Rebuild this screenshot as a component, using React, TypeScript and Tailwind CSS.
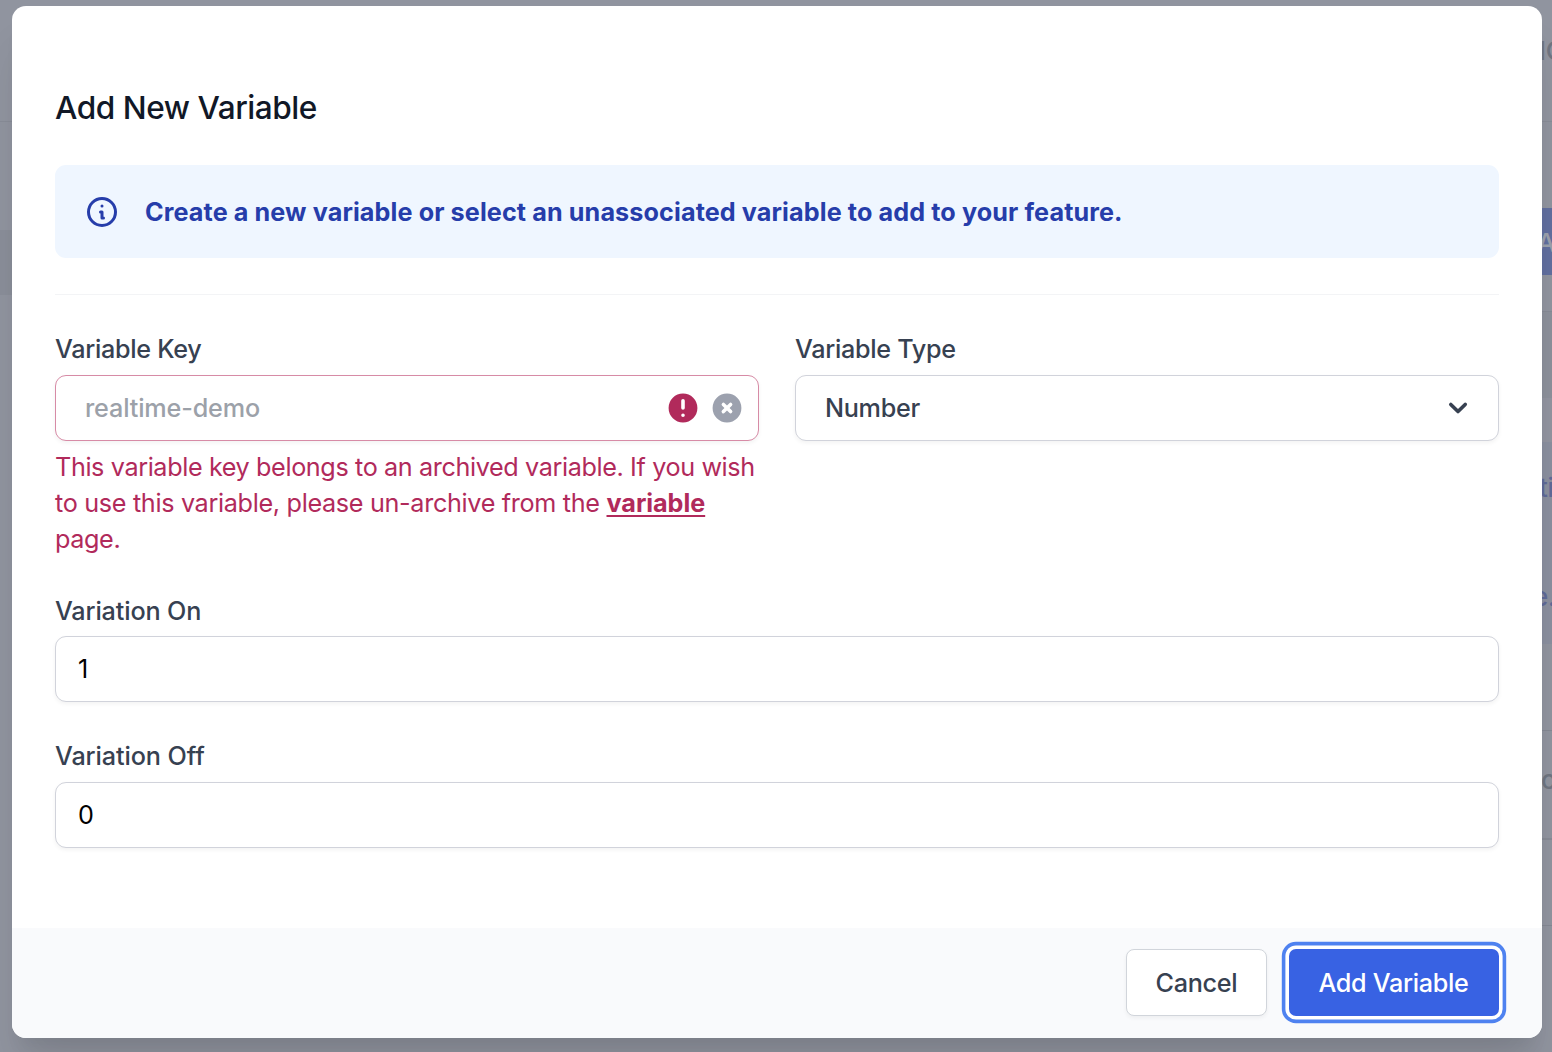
import type { ReactNode } from "react";
import { HiChevronDown, HiExclamationCircle, HiOutlineInformationCircle, HiXCircle } from "react-icons/hi";

function Backdrop() {
  return (
    <div className="absolute inset-0 flex justify-between bg-[#90949f] text-[26px] leading-9 font-medium">
      <div className="flex w-3 flex-col">
        <div className="h-[121px]" />
        <div className="h-[109px] border-t border-[#888c97]" />
        <div className="h-[65px] bg-[#8a8e99]" />
      </div>
      <div className="flex w-[10px] flex-col overflow-hidden whitespace-nowrap">
        <div className="flex h-[121px] items-start pt-[33px] text-[#6f7581]">
          <span className="-ml-[3px]">I</span>
          <span>C</span>
        </div>
        <div className="h-[87px] border-t border-[#888c97]" />
        <div className="flex h-[67px] items-center bg-[#616f9f] pt-[3px] text-[#9ba0ac]">
          <span className="-ml-[5px]">A</span>
        </div>
        <div className="h-[37px] border-b border-[#868a95]" />
        <div className="h-[86px] bg-[#8c909b]" />
        <div className="h-11 bg-[#9194a0]" />
        <div className="h-[202px] bg-[#8a8f9f] text-[#5f6a98]">
          <div className="-ml-[3px] pt-7">ti</div>
          <div className="-ml-[9px] pt-[73px]">e.</div>
        </div>
        <div className="h-[87px] border-b border-[#848893]" />
        <div className="flex h-[109px] items-center border-b-2 border-[#868a95] pb-[10px] text-[#6f7581]">
          <span className="-ml-px">c</span>
        </div>
        <div className="h-[86px] border-b border-[#848893]" />
      </div>
    </div>
  );
}

function Label({ children, className = "" }: { children: ReactNode; className?: string }) {
  return <div className={"text-[25.2px] leading-9 font-medium text-[#374151] " + className}>{children}</div>;
}

const field = "flex h-[66px] items-center rounded-[11px] border bg-white shadow-[0_2px_4px_rgba(0,0,0,0.05)]";

export default function App() {
  return (
    <div className="relative h-[1052px] w-[1552px] overflow-hidden px-3 pt-[6px] font-[Inter,sans-serif] tracking-[-0.3px]">
      <Backdrop />
      <div className="relative flex h-[1032px] w-[1530px] flex-col overflow-visible rounded-[14px] bg-white shadow-[0_36px_45px_-9px_rgba(0,0,0,0.1),0_18px_18px_-9px_rgba(0,0,0,0.06)]">
        <div className="flex h-[922px] flex-col px-[43px] pt-20">
          <h1 className="text-[31.6px] leading-[44px] font-medium tracking-[-0.47px] text-[#111827]">Add New Variable</h1>
          <div className="mt-[35px] flex h-[93px] items-center rounded-[11px] bg-[#eff6ff] pl-[29px] text-[#263daa]">
            <HiOutlineInformationCircle className="size-9" />
            <p className="ml-[25px] text-[25.2px] leading-9 font-bold tracking-[0.1px]">
              Create a new variable or select an unassociated variable to add to your feature.
            </p>
          </div>
          <hr className="mt-9 border-[#f3f4f6]" />
          <div className="mt-9 grid h-[262px] grid-cols-2 gap-9">
            <div>
              <Label>Variable Key</Label>
              <div className={field + " mt-2 justify-between border-[#d78ba6] pr-[13px] pl-[29px]"}>
                <span className="pt-[2px] text-[25.2px] font-medium tracking-[-0.15px] text-[#9ca1a9]">realtime-demo</span>
                <span className="flex gap-2">
                  <HiExclamationCircle className="size-9 text-[#b12a5b]" />
                  <HiXCircle className="size-9 text-[#9ca1ae]" />
                </span>
              </div>
              <p className="mt-2 text-[25.2px] leading-9 tracking-[-0.38px] text-[#b12a5b]">
                This variable key belongs to an archived variable. If you wish
                <br />
                <span className="tracking-[-0.32px]">to use this variable, please un-archive from the </span>
                <a className="font-bold tracking-[-0.05px] underline decoration-2 underline-offset-[3px]">variable</a>
                <br />
                page.
              </p>
            </div>
            <div>
              <Label>Variable Type</Label>
              <div className={field + " mt-2 justify-between border-[#d1d3db] pr-[22px] pl-[29px]"}>
                <span className="pt-[2px] text-[25.2px] font-medium text-[#374151]">Number</span>
                <HiChevronDown className="size-9 text-[#374151]" />
              </div>
            </div>
          </div>
          <Label className="tracking-[-0.15px]">Variation On</Label>
          <div className={field + " mt-[7px] border-[#d1d3db] pt-[2px] pl-[22px] text-[25.2px] text-black"}>1</div>
          <Label className="mt-9 tracking-[-0.1px]">Variation Off</Label>
          <div className={field + " mt-2 border-[#d1d3db] pt-[2px] pl-[22px] text-[25.2px] text-black"}>0</div>
        </div>
        <div className="flex h-[110px] justify-end rounded-b-[14px] bg-[#f9fafc] pt-[21px] pr-[43px] text-[25.2px] font-medium">
          <button className="h-[67px] w-[141px] rounded-[8px] border border-[#d1d5db] bg-white pt-[2px] text-[#374151] shadow-[0_2px_4px_rgba(0,0,0,0.05)]">
            Cancel
          </button>
          <button className="ml-[22px] h-[67px] w-[210px] rounded-[7px] bg-[#3862e3] pt-[2px] pr-px text-white shadow-[0_0_0_3.6px_#fff,0_0_0_7.2px_#4f82f0]">
            Add Variable
          </button>
        </div>
      </div>
    </div>
  );
}
